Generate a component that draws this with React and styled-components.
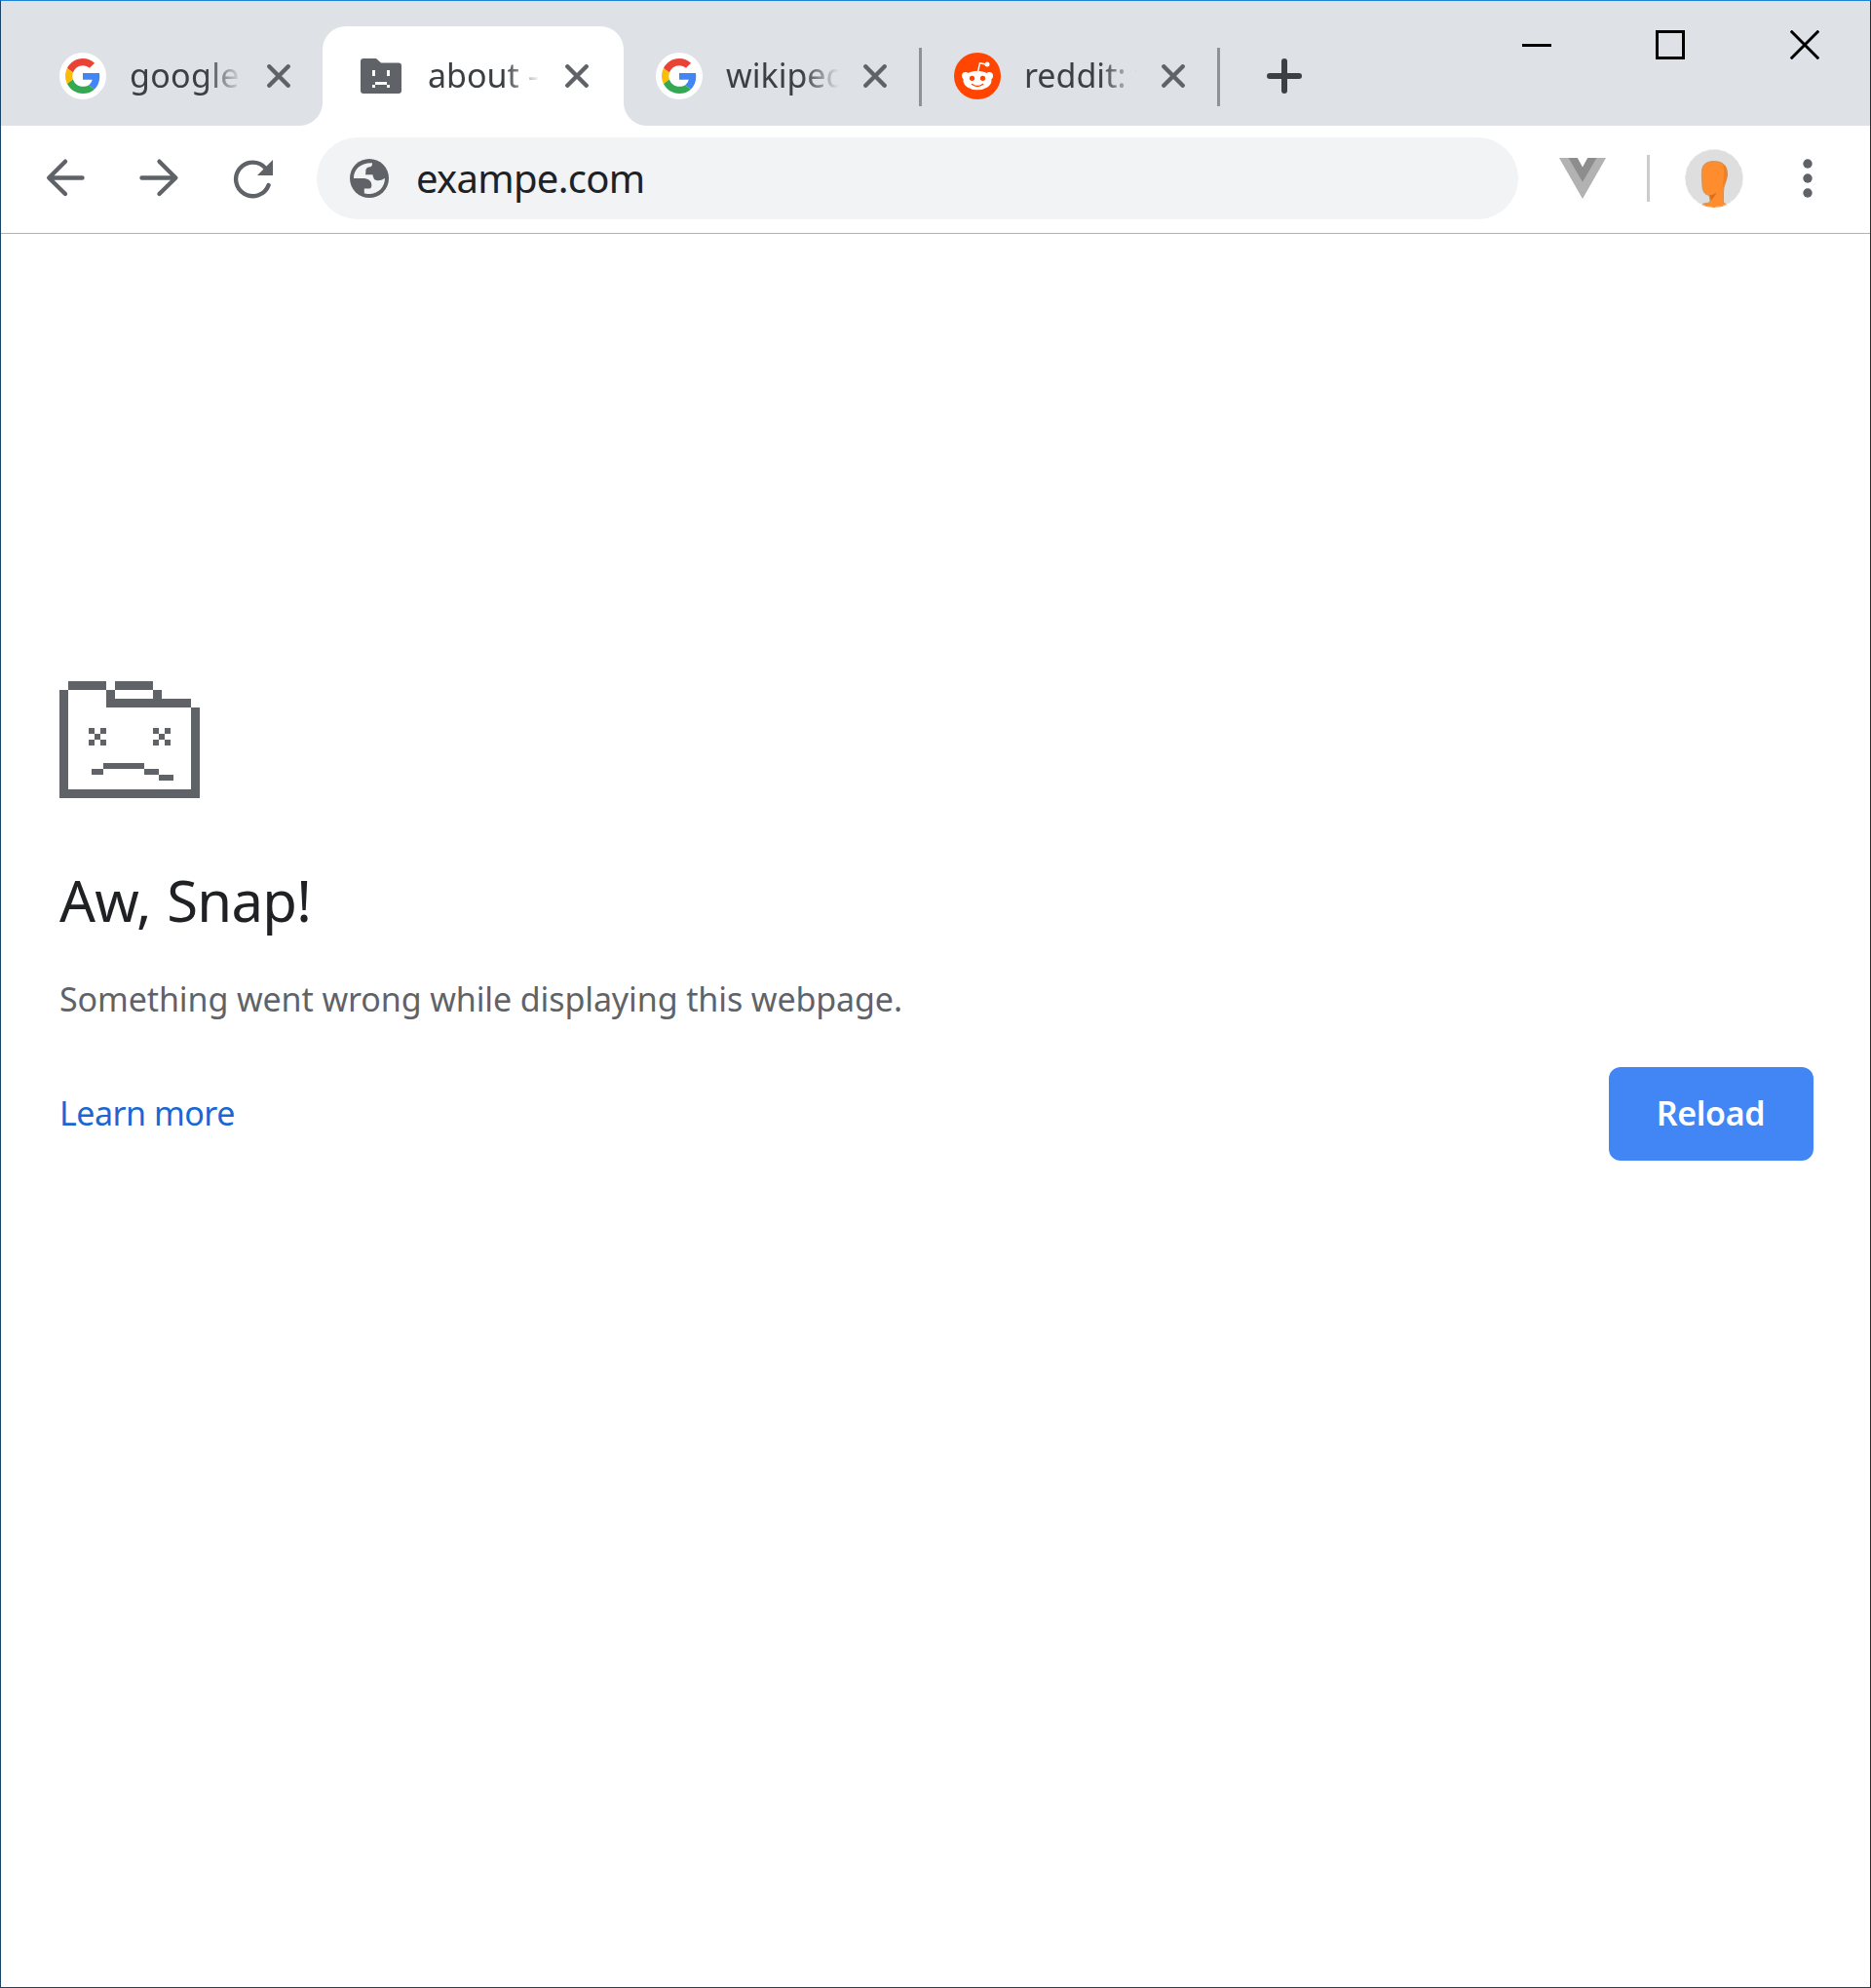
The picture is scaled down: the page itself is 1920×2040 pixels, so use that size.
import React from "react";
import styled, { createGlobalStyle, css } from "styled-components";

const GlobalStyle = createGlobalStyle`
  *, *::before, *::after { box-sizing: border-box; }
  body { margin: 0; background: #fff; font-family: "Segoe UI", "Noto Sans", "Open Sans", sans-serif; }
  button { font: inherit; border: 0; padding: 0; background: none; color: inherit; }
  svg { display: block; flex: none; }
`;

const Window = styled.div`
  display: flex;
  flex-direction: column;
  width: 1920px;
  height: 2040px;
  background: #fff;
  border: 1px solid #1a4568;
  border-top-color: #1883d7;
  border-right-color: #1f2b55;
`;

const TitleBar = styled.header`
  display: flex;
  justify-content: space-between;
  height: 128px;
  background: #dee1e6;
`;

const TabStrip = styled.div`
  display: flex;
  align-items: flex-end;
  padding-left: 27px;
`;

const flare = css`
  content: "";
  position: absolute;
  bottom: 0;
  width: 24px;
  height: 24px;
`;

const Tab = styled.div`
  position: relative;
  display: flex;
  align-items: center;
  width: ${(p) => (p.$active ? 309 : 306)}px;
  height: 102px;
  margin-left: ${(p) => (p.$active ? -3 : 0)}px;
  padding: 0 0 0 ${(p) => (p.$active ? 36 : 33)}px;
  ${(p) =>
    p.$active &&
    css`
      background: #fff;
      border-radius: 24px 24px 0 0;
      &::before {
        ${flare}
        left: -24px;
        background: radial-gradient(circle at 0 0, transparent 23.5px, #fff 24.5px);
      }
      &::after {
        ${flare}
        right: -24px;
        background: radial-gradient(circle at 100% 0, transparent 23.5px, #fff 24.5px);
      }
    `}
`;

const TabTitle = styled.span`
  width: 118px;
  margin: 0 23px 2px 24px;
  overflow: hidden;
  white-space: nowrap;
  font-size: 34px;
  line-height: 60px;
  letter-spacing: ${(p) => p.$spacing || 0}px;
  color: #3c4043;
  mask-image: linear-gradient(to right, #000 78px, transparent 116px);
`;

const TabDivider = styled.span`
  width: 3px;
  height: 60px;
  margin: 2px 0 0 auto;
  background: #8e9196;
`;

const NewTab = styled.button`
  display: flex;
  align-items: center;
  height: 102px;
  margin-left: 48px;
`;

const WindowControls = styled.div`
  display: flex;
  align-items: flex-start;
  gap: 107px;
  padding: 30px 52px 0 0;
  button:last-child { margin-left: 1px; }
`;

const Toolbar = styled.nav`
  display: flex;
  align-items: center;
  height: 111px;
  padding: 0 0 2px 44px;
  border-bottom: 1px solid #b2b2b2;
`;

const NavButton = styled.button`
  width: 48px;
  margin-right: ${(p) => p.$after}px;
`;

const Omnibox = styled.div`
  display: flex;
  align-items: center;
  width: 1233px;
  height: 84px;
  padding-left: 34px;
  border-radius: 42px;
  background: #f1f3f4;
`;

const Address = styled.span`
  margin-left: 28px;
  font-size: 40px;
  line-height: 60px;
  letter-spacing: -0.7px;
  color: #202124;
`;

const Extension = styled.button`
  margin-left: 42px;
`;

const ToolbarDivider = styled.span`
  width: 3px;
  height: 48px;
  margin: 0 36px 0 42px;
  background: #ccc;
`;

const MenuButton = styled.button`
  margin-left: 61px;
`;

const Page = styled.main`
  display: flex;
  flex-direction: column;
  width: 1860px;
  padding: 459px 0 0 60px;
`;

const Heading = styled.h1`
  margin: 65px 0 0;
  font-size: 58px;
  font-weight: 400;
  line-height: 80px;
  letter-spacing: -0.7px;
  word-spacing: 2px;
  color: #202124;
`;

const Message = styled.p`
  margin: 31px 0 0;
  font-size: 34px;
  line-height: 60px;
  letter-spacing: -0.11px;
  color: #5f6368;
`;

const Actions = styled.div`
  display: flex;
  align-items: center;
  justify-content: space-between;
  margin-top: 40px;
`;

const LearnMore = styled.a`
  margin-bottom: 2px;
  font-size: 34px;
  line-height: 60px;
  letter-spacing: -0.5px;
  color: #1967d2;
`;

const ReloadButton = styled.button`
  && {
    width: 210px;
    height: 96px;
    padding: 0 1px 2px 0;
    border-radius: 12px;
    background: #4285f4;
    color: #fff;
    font-size: 34px;
    font-weight: 600;
    letter-spacing: -0.3px;
  }
`;

const GoogleIcon = () => (
  <svg width="48" height="48" viewBox="0 0 48 48">
    <circle cx="24" cy="24" r="24" fill="#fff" />
    <g transform="translate(6 6) scale(0.75)">
      <path fill="#EA4335" d="M24 9.5c3.54 0 6.71 1.22 9.21 3.6l6.85-6.85C35.9 2.38 30.47 0 24 0 14.62 0 6.51 5.38 2.56 13.22l7.98 6.19C12.43 13.72 17.74 9.5 24 9.5z" />
      <path fill="#4285F4" d="M46.98 24.55c0-1.57-.15-3.09-.38-4.55H24v9.02h12.94c-.58 2.96-2.26 5.48-4.78 7.18l7.73 6c4.51-4.18 7.09-10.36 7.09-17.65z" />
      <path fill="#FBBC05" d="M10.53 28.59c-.48-1.45-.76-2.99-.76-4.59s.27-3.14.76-4.59l-7.98-6.19C.92 16.46 0 20.12 0 24c0 3.88.92 7.54 2.56 10.78l7.97-6.19z" />
      <path fill="#34A853" d="M24 48c6.48 0 11.93-2.13 15.89-5.81l-7.73-6c-2.15 1.45-4.92 2.3-8.16 2.3-6.26 0-11.57-4.22-13.47-9.91l-7.98 6.19C6.51 42.62 14.62 48 24 48z" />
    </g>
  </svg>
);

const SadFolderIcon = () => (
  <svg width="48" height="48" viewBox="0 0 48 48">
    <path fill="#5f6368" d="M6 6h13l5 4.500h18a3 3 0 0 1 3 3v25.500a3 3 0 0 1-3 3H6a3 3 0 0 1-3-3V9a3 3 0 0 1 3-3z" />
    <path fill="#fff" d="M15 18h3v6h-3zM30 18h3v6h-3zM18 30h12v3H18zM15 33h3v3h-3zM30 33h3v3h-3z" />
  </svg>
);

const RedditIcon = () => (
  <svg width="48" height="48" viewBox="0 0 48 48">
    <circle cx="24" cy="24" r="24" fill="#ff4500" />
    <path d="M24.500 20l2-9.300 7 1.500" fill="none" stroke="#fff" strokeWidth="1.500" strokeLinejoin="round" />
    <circle cx="34" cy="12" r="2.500" fill="#fff" />
    <circle cx="11.800" cy="23.800" r="3.800" fill="#fff" />
    <circle cx="36.200" cy="23.800" r="3.800" fill="#fff" />
    <ellipse cx="24" cy="28.500" rx="14.500" ry="9.800" fill="#fff" />
    <circle cx="18.500" cy="26.300" r="2.600" fill="#ff4500" />
    <circle cx="29.500" cy="26.300" r="2.600" fill="#ff4500" />
    <path d="M18.500 32.500q5.500 4 11 0" fill="none" stroke="#ff4500" strokeWidth="1.500" strokeLinecap="round" />
  </svg>
);

const CloseIcon = () => (
  <svg width="24" height="24" viewBox="0 0 24 24">
    <path d="M2.300 2.300l19.400 19.400M21.700 2.300L2.300 21.700" stroke="#5f6368" strokeWidth="4.400" strokeLinecap="round" />
  </svg>
);

const BackIcon = () => (
  <svg width="48" height="48" viewBox="0 0 48 48" fill="none" stroke="#5f6368" strokeWidth="4.400" strokeLinecap="round">
    <path d="M39.500 23.500H6M22 6.700L5.200 23.500L22 40" strokeLinejoin="round" />
  </svg>
);

const ForwardIcon = () => (
  <svg width="48" height="48" viewBox="0 0 48 48" fill="none" stroke="#5f6368" strokeWidth="4.400" strokeLinecap="round">
    <path d="M6.500 23.500H40M24.500 6.700L41.300 23.500L24.500 40" strokeLinejoin="round" />
  </svg>
);

const ReloadIcon = () => (
  <svg width="48" height="48" viewBox="0 0 48 48">
    <path d="M36.500 13.600A17.300 17.300 0 1 0 39.600 31" fill="none" stroke="#5f6368" strokeWidth="4.400" strokeLinecap="round" />
    <path d="M44 5v16H28z" fill="#5f6368" />
  </svg>
);

const GlobeIcon = () => (
  <svg width="40" height="40" viewBox="0 0 40 40">
    <circle cx="20" cy="20" r="20" fill="#5f6368" />
    <path fill="#f1f3f4" d="M4 20C3.600 11 11 3.800 23 4.200C23.200 6.500 22.500 8 20.500 8.300C17.500 8.800 16 10.500 16.300 13C16.400 14.500 16 15.500 16 16.200H23.500C24 19.500 25 22 28.500 22.200C31 22.300 33 21.800 35.900 19.800C36.300 29 29 35.700 21 36C18 36.200 15.500 35.600 14.800 35.200V30.500H20C21.600 30.500 22.500 29 22.300 26.500C22 22.500 19 20 13 20Z" />
  </svg>
);

const VueIcon = () => (
  <svg width="48" height="42" viewBox="0 0 48 42">
    <path fill="#b2b2b2" d="M0 0h10l14 24.500L38 0h10L24 42z" />
    <path fill="#8d8d8d" d="M9.500 0h9.300L24 9.500 29.200 0h9.300L24 25z" />
  </svg>
);

const AvatarIcon = () => (
  <svg width="60" height="60" viewBox="0 0 60 60">
    <defs>
      <clipPath id="avatar">
        <circle cx="30" cy="30" r="30" />
      </clipPath>
    </defs>
    <g clipPath="url(#avatar)">
      <circle cx="30" cy="30" r="30" fill="#dedede" />
      <path
        fill="#ff8c2d"
        stroke="#c8956a"
        strokeWidth="1"
        d="M25 47.500C20.500 46.500 18.500 44 18 38L17.400 27C17 17 20 12.600 30 12.600C39.500 12.600 44 17.500 43.500 27C43 33 39.500 37 39.500 44V54C40 56 42 56.500 43 57V61H18V56.500C22 55 26 56 26 52.500Z"
      />
      <path fill="#f57f1f" d="M39.500 15.500C42.500 18.500 43.500 22 43 27C42.500 33 38.800 37 39 44V38C38.500 34 41.500 28 39.500 15.500z" />
      <path fill="#d86f1c" d="M25.300 47.500C28 47 30.500 46 32.500 44.500C31 48 29 50 26.500 53.500V50z" />
    </g>
    <circle cx="30" cy="30" r="29.500" fill="none" stroke="#fff" strokeOpacity=".45" strokeDasharray="5 3" />
  </svg>
);

const MoreIcon = () => (
  <svg width="10" height="42" viewBox="0 0 10 42" fill="#5f6368">
    <circle cx="5" cy="6" r="4.700" />
    <circle cx="5" cy="21" r="4.700" />
    <circle cx="5" cy="36" r="4.700" />
  </svg>
);

const PlusIcon = () => (
  <svg width="36" height="36" viewBox="0 0 36 36">
    <path d="M3 18h30M18 3v30" stroke="#3c4043" strokeWidth="6" strokeLinecap="round" />
  </svg>
);

const ControlIcon = ({ path }) => (
  <svg width="30" height="30" viewBox="0 0 30 30">
    <path d={path} fill="none" stroke="#000" strokeWidth="3" />
  </svg>
);

const CrashIcon = () => (
  <svg width="144" height="120" viewBox="0 0 48 40" shapeRendering="crispEdges">
    <path
      fill="#5f6368"
      d="M3 0h13v3H3zM19 0h13v3H19zM0 3h3v37H0zM16 3h3v6h-3zM32 3h3v3h-3zM16 6h29v3H16zM45 9h3v31h-3zM0 37h48v3H0z
         M10 16h2v2h-2zM14 16h2v2h-2zM12 18h2v2h-2zM10 20h2v2h-2zM14 20h2v2h-2z
         M32 16h2v2h-2zM36 16h2v2h-2zM34 18h2v2h-2zM32 20h2v2h-2zM36 20h2v2h-2z
         M11 30h4v2h-4zM15 28h14v2H15zM29 30h5v2h-5zM34 32h5v2h-5z"
    />
  </svg>
);

const TABS = [
  { title: "google.com", Icon: GoogleIcon, spacing: 0.3 },
  { title: "about - blank", Icon: SadFolderIcon, active: true },
  { title: "wikipedia", Icon: GoogleIcon, divider: true },
  { title: "reddit: the", Icon: RedditIcon, divider: true },
];

const CONTROLS = [
  { label: "Minimize", path: "M0 15.500h30" },
  { label: "Maximize", path: "M1.500 1.500h27v27h-27z" },
  { label: "Close", path: "M.7.700l28.600 28.600M29.300.700L.7 29.300" },
];

export default function App() {
  return (
    <>
      <GlobalStyle />
      <Window>
        <TitleBar>
          <TabStrip>
            {TABS.map(({ title, Icon, active, divider, spacing }) => (
              <Tab key={title} $active={active}>
                <Icon />
                <TabTitle $spacing={spacing}>{title}</TabTitle>
                <CloseIcon />
                {divider && <TabDivider />}
              </Tab>
            ))}
            <NewTab aria-label="New tab">
              <PlusIcon />
            </NewTab>
          </TabStrip>
          <WindowControls>
            {CONTROLS.map(({ label, path }) => (
              <button key={label} aria-label={label}>
                <ControlIcon path={path} />
              </button>
            ))}
          </WindowControls>
        </TitleBar>
        <Toolbar>
          <NavButton aria-label="Back" $after={46}>
            <BackIcon />
          </NavButton>
          <NavButton aria-label="Forward" $after={49}>
            <ForwardIcon />
          </NavButton>
          <NavButton aria-label="Reload" $after={41}>
            <ReloadIcon />
          </NavButton>
          <Omnibox>
            <GlobeIcon />
            <Address>exampe.com</Address>
          </Omnibox>
          <Extension aria-label="Vue devtools">
            <VueIcon />
          </Extension>
          <ToolbarDivider />
          <AvatarIcon />
          <MenuButton aria-label="Menu">
            <MoreIcon />
          </MenuButton>
        </Toolbar>
        <Page>
          <CrashIcon />
          <Heading>Aw, Snap!</Heading>
          <Message>Something went wrong while displaying this webpage.</Message>
          <Actions>
            <LearnMore>Learn more</LearnMore>
            <ReloadButton>Reload</ReloadButton>
          </Actions>
        </Page>
      </Window>
    </>
  );
}
